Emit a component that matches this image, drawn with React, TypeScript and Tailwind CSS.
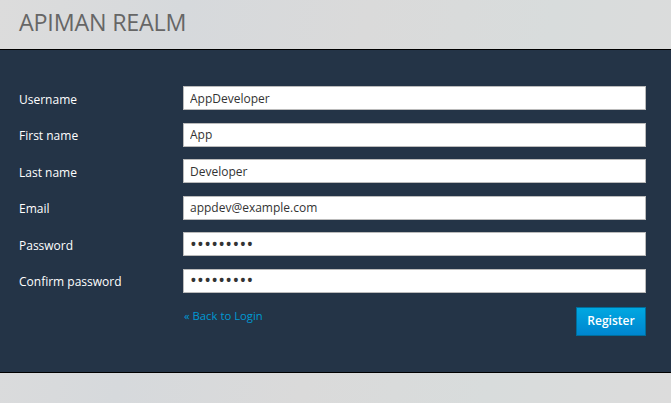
import React from "react";

const rows: { label: string; value: string; type?: string }[] = [
  { label: "Username", value: "AppDeveloper" },
  { label: "First name", value: "App" },
  { label: "Last name", value: "Developer" },
  { label: "Email", value: "appdev@example.com" },
  { label: "Password", value: "password1", type: "password" },
  { label: "Confirm password", value: "password1", type: "password" },
];

export default function App() {
  return (
    <div
      className="w-[671px] h-[403px] overflow-hidden flex flex-col bg-[linear-gradient(100deg,#dcdcdc_0%,#d6d9dc_25%,#dadada_50%,#d8dcdc_75%,#dcdcdc_100%)]"
      style={{ fontFamily: '"Open Sans", "Liberation Sans", sans-serif' }}
    >
      <div className="h-[49px] shrink-0 pl-[19px] flex items-center">
        <h1 className="text-[23.3px] leading-none text-[#666] font-normal tracking-[-0.2px] pb-[3px]">
          APIMAN REALM
        </h1>
      </div>
      <div className="shrink-0 border-t border-b border-black bg-[#243447] h-[324px] pt-[36px] pl-[19px] pr-[25px]">
        <div className="flex flex-col gap-[12.6px]">
          {rows.map((r) => (
            <div key={r.label} className="flex items-center h-[24px]">
              <label className="w-[164px] text-[12px] text-white leading-none pt-[3px]">
                {r.label}
              </label>
              <input
                readOnly
                type={r.type ?? "text"}
                value={r.value}
                className={`flex-1 h-[24px] bg-white border border-[#bbb] px-[6px] text-[#333] outline-none ${
                  r.type === "password" ? "text-[18px] tracking-[0.3px]" : "text-[12px]"
                }`}
                style={{ fontFamily: '"Open Sans", "Liberation Sans", sans-serif' }}
              />
            </div>
          ))}
        </div>
        <div className="flex items-start justify-between pl-[165px] mt-[14px]">
          <a className="text-[11.3px] text-[#0099d3] leading-none mt-[3px] cursor-pointer">
            « Back to Login
          </a>
          <button className="w-[70px] h-[29px] bg-[linear-gradient(#00a8e1,#0085cf)] border border-[#006e9c] text-white text-[12px] font-semibold leading-none">
            Register
          </button>
        </div>
      </div>
      <div className="flex-1" />
    </div>
  );
}
